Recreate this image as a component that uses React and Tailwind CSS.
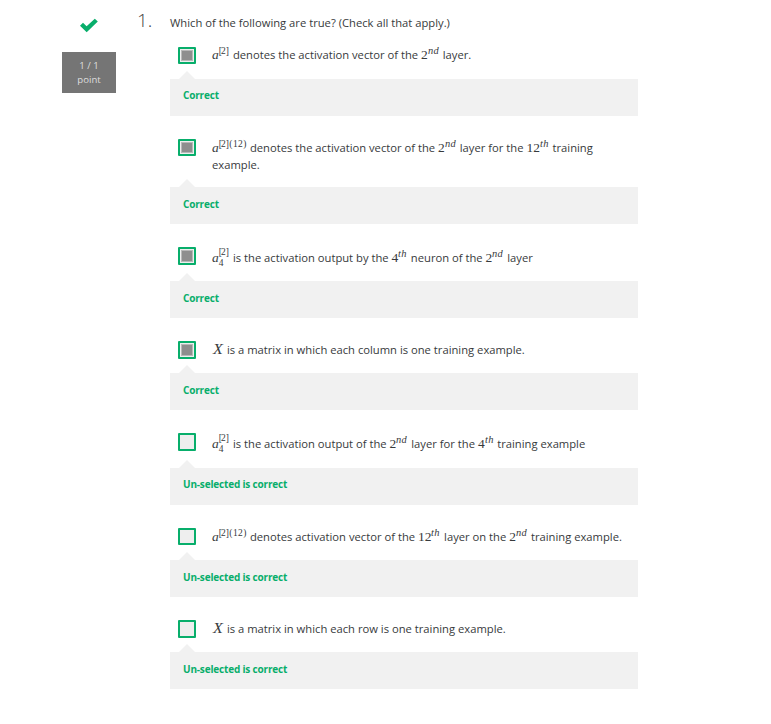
const mathFont = "font-['Liberation_Serif',serif]";

function Ordinal({ n, suffix }) {
  const width = n === "12" ? "w-[23.2px]" : suffix === "nd" ? "w-[18.8px]" : "w-[16.4px]";
  return (
    <span className={`inline-block whitespace-nowrap text-[13.5px] leading-[0] ${mathFont} ${width}`}>
      {n}
      <span className="inline-block origin-left scale-x-110 align-[5px] text-[9.5px] italic leading-[0] tracking-[0.3px]">
        {suffix}
      </span>
    </span>
  );
}

function Activation({ unit, example }) {
  return (
    <span className={`inline-block whitespace-nowrap text-[13.5px] leading-[0] ${mathFont} ${example ? "w-[35px]" : "w-[18px]"}`}>
      <span className="italic">a</span>
      {unit && <span className="-mr-[5px] inline-block w-[5px] align-[-4px] text-[9.5px] leading-[0]">{unit}</span>}
      <span className={`inline-block text-[9.5px] leading-[0] ${unit ? "align-[7px]" : "align-[5px]"}`}>
        <span className="inline-block w-[2.3px]">[</span>
        <span className="inline-block w-[4.8px]">2</span>
        <span className="inline-block w-[3.2px]">]</span>
        {example && <span className="ml-[0.3px] tracking-[0.4px]">({example})</span>}
      </span>
    </span>
  );
}

function MatrixX() {
  return (
    <span className={`inline-block w-3 text-[14px] italic leading-[0] ${mathFont}`}>
      <span className="ml-[1px] inline-block origin-left scale-x-[1.15]">X</span>
    </span>
  );
}

const options = [
  {
    checked: true,
    box: "h-[17px]",
    row: "h-[32px]",
    shift: "-mt-[1px]",
    note: "pt-[8px]",
    body: (
      <>
        <Activation /> denotes the activation vector of the <Ordinal n="2" suffix="nd" /> layer.
      </>
    ),
  },
  {
    checked: true,
    box: "h-[17px]",
    row: "h-[48px] mt-[23px]",
    shift: "mt-0",
    note: "pt-[9px]",
    body: (
      <>
        <Activation example="12" /> denotes the activation vector of the <Ordinal n="2" suffix="nd" /> layer for the{" "}
        <Ordinal n="12" suffix="th" /> training
        <br />
        example.
      </>
    ),
  },
  {
    checked: true,
    box: "h-[18px]",
    row: "h-[34px] mt-[23px]",
    shift: "mt-[2px]",
    note: "pt-[9px]",
    body: (
      <>
        <Activation unit="4" /> is the activation output by the <Ordinal n="4" suffix="th" /> neuron of the{" "}
        <Ordinal n="2" suffix="nd" /> layer
      </>
    ),
  },
  {
    checked: true,
    box: "h-[18px]",
    row: "h-[32px] mt-[23px]",
    shift: "mt-0",
    note: "pt-[9px]",
    body: (
      <>
        <MatrixX /> is a matrix in which each column is one training example.
      </>
    ),
  },
  {
    checked: false,
    box: "h-[18px]",
    row: "h-[35px] mt-[23px]",
    shift: "mt-[2px]",
    note: "pt-[8px]",
    body: (
      <>
        <Activation unit="4" /> is the activation output of the <Ordinal n="2" suffix="nd" /> layer for the{" "}
        <Ordinal n="4" suffix="th" /> training example
      </>
    ),
  },
  {
    checked: false,
    box: "h-[17px]",
    row: "h-[32px] mt-[23px]",
    shift: "mt-0",
    note: "pt-[9px]",
    body: (
      <>
        <Activation example="12" /> denotes activation vector of the <Ordinal n="12" suffix="th" /> layer on the{" "}
        <Ordinal n="2" suffix="nd" /> training example.
      </>
    ),
  },
  {
    checked: false,
    box: "h-[18px]",
    row: "h-[32px] mt-[23px]",
    shift: "mt-0",
    note: "pt-[9px]",
    body: (
      <>
        <MatrixX /> is a matrix in which each row is one training example.
      </>
    ),
  },
];

function Option({ checked, box, row, shift, note, body }) {
  return (
    <div>
      <div className={`flex items-start pl-2 ${row}`}>
        <div className={`flex w-[18px] shrink-0 rounded-[1px] border-2 border-[#08ae6b] bg-[#eee] p-px ${box}`}>
          {checked && <div className="grow border border-[#b8b8b8] bg-[#8e8e8e]" />}
        </div>
        <p className={`ml-4 whitespace-nowrap text-[11.22px] leading-[17px] text-[#373a3c] ${shift}`}>{body}</p>
      </div>
      <div className={`relative h-[37px] bg-[#f1f1f1] pl-[13px] text-[10px] font-bold leading-[16px] tracking-[-0.17px] text-[#08ae6b] ${note}`}>
        <svg className="absolute -top-2 left-[9px]" width="16" height="8" viewBox="0 0 16 8">
          <path d="M0 8L8 0l8 8z" fill="#f1f1f1" />
        </svg>
        {checked ? "Correct" : "Un-selected is correct"}
      </div>
    </div>
  );
}

export default function App() {
  return (
    <div className="flex h-[724px] w-[771px] overflow-hidden bg-white font-['Open_Sans',sans-serif]">
      <div className="ml-[62px] flex w-[54px] flex-col items-center pt-[18px]">
        <svg width="18" height="15" viewBox="0 0 18 15">
          <path d="M0 7.8L3 4.8L6.6 8.3L14.8 .8L17.8 3.6L6.7 14.3z" fill="#08ae6b" />
        </svg>
        <div className="mt-[19px] h-[41px] w-full bg-[#757575] pt-[7px] text-center text-[9.6px] leading-[14px] text-[#dedede]">
          <div>1 / 1</div>
          <div>point</div>
        </div>
      </div>
      <div className="ml-[21px] w-[33px] pt-[8px] text-[19px] font-light leading-6 text-[#444]">1.</div>
      <div className="w-[468px]">
        <h1 className="h-[47px] pt-[14px] text-[11.22px] font-normal leading-[17px] text-[#373a3c]">
          Which of the following are true? (Check all that apply.)
        </h1>
        {options.map((option, i) => (
          <Option key={i} {...option} />
        ))}
      </div>
    </div>
  );
}
